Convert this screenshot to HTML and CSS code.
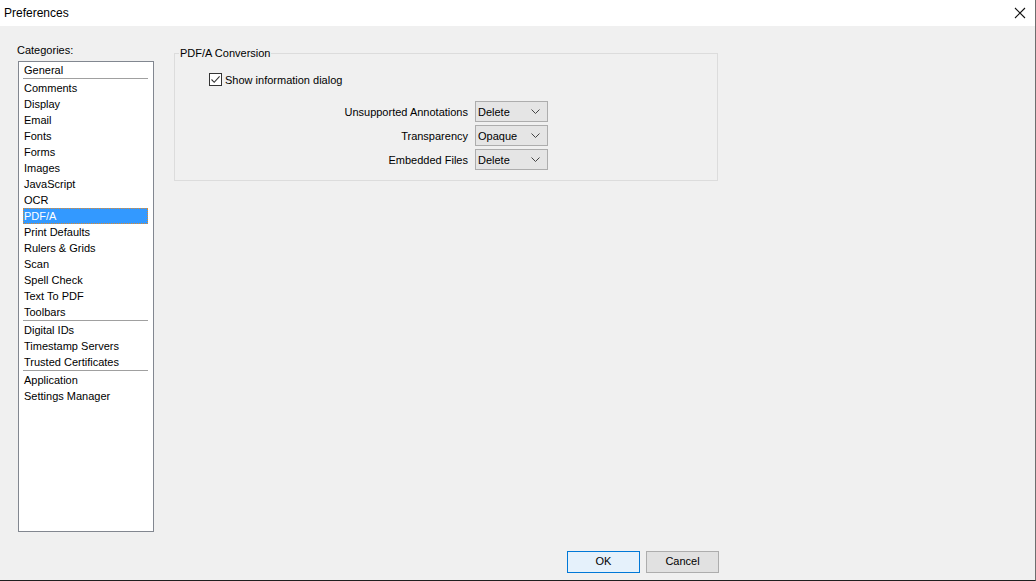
FILE: index.html
```html
<!DOCTYPE html>
<html lang="en">

<head>
    <meta charset="UTF-8">
    <title>Preferences</title>
    <link rel="stylesheet" href="styles.css">
</head>

<body>
    <div class="window">
        <div class="titlebar">
            <span class="title">Preferences</span>
            <span class="close-btn">
                <svg width="12" height="12" viewBox="0 0 12 12"><path d="M1 1 L11 11 M11 1 L1 11" stroke="#111" stroke-width="1.1" fill="none"/></svg>
            </span>
        </div>
        <div class="main">
            <div class="sidebar">
                <div class="cat-label">Categories:</div>
                <div class="cat-list">
                    <div class="cat-item">General</div>
                    <div class="cat-sep"></div>
                    <div class="cat-item">Comments</div>
                    <div class="cat-item">Display</div>
                    <div class="cat-item">Email</div>
                    <div class="cat-item">Fonts</div>
                    <div class="cat-item">Forms</div>
                    <div class="cat-item">Images</div>
                    <div class="cat-item">JavaScript</div>
                    <div class="cat-item">OCR</div>
                    <div class="cat-item selected">PDF/A</div>
                    <div class="cat-item">Print Defaults</div>
                    <div class="cat-item">Rulers &amp; Grids</div>
                    <div class="cat-item">Scan</div>
                    <div class="cat-item">Spell Check</div>
                    <div class="cat-item">Text To PDF</div>
                    <div class="cat-item">Toolbars</div>
                    <div class="cat-sep"></div>
                    <div class="cat-item">Digital IDs</div>
                    <div class="cat-item">Timestamp Servers</div>
                    <div class="cat-item">Trusted Certificates</div>
                    <div class="cat-sep"></div>
                    <div class="cat-item">Application</div>
                    <div class="cat-item">Settings Manager</div>
                </div>
            </div>
            <div class="panel">
                <fieldset class="group">
                    <legend>PDF/A Conversion</legend>
                    <div class="check-row">
                        <span class="checkbox">
                            <svg width="11" height="11" viewBox="0 0 11 11"><path d="M1.5 5.5 L4.2 8.3 L9.6 2.3" stroke="#333" stroke-width="1.1" fill="none"/></svg>
                        </span>
                        <span>Show information dialog</span>
                    </div>
                    <div class="form-rows">
                        <div class="form-row">
                            <label>Unsupported Annotations</label>
                            <div class="combo"><span>Delete</span><svg width="9" height="5" viewBox="0 0 9 5"><path d="M0.5 0.5 L4.5 4.5 L8.5 0.5" stroke="#444" fill="none"/></svg></div>
                        </div>
                        <div class="form-row">
                            <label>Transparency</label>
                            <div class="combo"><span>Opaque</span><svg width="9" height="5" viewBox="0 0 9 5"><path d="M0.5 0.5 L4.5 4.5 L8.5 0.5" stroke="#444" fill="none"/></svg></div>
                        </div>
                        <div class="form-row">
                            <label>Embedded Files</label>
                            <div class="combo"><span>Delete</span><svg width="9" height="5" viewBox="0 0 9 5"><path d="M0.5 0.5 L4.5 4.5 L8.5 0.5" stroke="#444" fill="none"/></svg></div>
                        </div>
                    </div>
                </fieldset>
            </div>
        </div>
        <div class="footer">
            <div class="btn btn-default">OK</div>
            <div class="btn">Cancel</div>
        </div>
    </div>
</body>

</html>
```

FILE: styles.css
```css
* {
    box-sizing: border-box;
}

body {
    margin: 0;
    font-family: "Liberation Sans", Arial, sans-serif;
    font-size: 11px;
    color: #000;
    background: #f0f0f0;
}

.window {
    width: 1036px;
    height: 581px;
    display: flex;
    flex-direction: column;
    background: #f0f0f0;
    border-right: 1px solid #6e6e6e;
    border-bottom: 1px solid #1f1f1f;
}

.titlebar {
    height: 26px;
    flex: none;
    background: #ffffff;
    display: flex;
    align-items: center;
    justify-content: space-between;
    padding-left: 4px;
}

.title {
    font-size: 12px;
}

.close-btn {
    width: 46px;
    height: 26px;
    display: flex;
    align-items: center;
    justify-content: center;
    padding-left: 16px;
}

.main {
    flex: 1;
    display: flex;
    padding: 18px 0 0 17px;
    min-height: 0;
}

.sidebar {
    width: 137px;
    display: flex;
    flex-direction: column;
}

.cat-label {
    line-height: 13px;
    height: 13px;
    margin-bottom: 4px;
}

.cat-list {
    flex: 1;
    margin-left: 1px;
    background: #ffffff;
    border: 1px solid #828790;
}

.cat-item {
    height: 16px;
    line-height: 16px;
    margin: 0 5px 0 4px;
    padding-left: 1px;
    white-space: nowrap;
}

.cat-item.selected {
    background: #3399ff;
    color: #ffffff;
    outline: 1px dotted #e08a2c;
    outline-offset: -1px;
}

.cat-sep {
    height: 2px;
    margin: 0 5px 0 4px;
    border-top: 1px solid #a0a0a0;
}

.panel {
    margin-left: 20px;
    width: 544px;
}

.group {
    margin: 3px 0 0 0;
    padding: 0 0 10px 34px;
    border: 1px solid #dcdcdc;
    min-width: 0;
}

.group legend {
    padding: 0 1px;
    margin-left: -30px;
    line-height: 13px;
}

.check-row {
    display: flex;
    align-items: center;
    height: 13px;
    margin-top: 13px;
}

.checkbox {
    width: 13px;
    height: 13px;
    border: 1px solid #333;
    background: #ffffff;
    display: flex;
    align-items: center;
    justify-content: center;
    margin-right: 3px;
}

.form-rows {
    display: flex;
    flex-direction: column;
    gap: 3px;
    margin-top: 15px;
}

.form-row {
    display: flex;
    align-items: center;
    height: 21px;
}

.form-row label {
    width: 259px;
    text-align: right;
    margin-right: 7px;
}

.combo {
    width: 73px;
    height: 21px;
    border: 1px solid #adadad;
    background: #e5e5e5;
    display: flex;
    align-items: center;
    justify-content: space-between;
    padding: 0 7px 0 2px;
}

.footer {
    flex: none;
    display: flex;
    justify-content: flex-end;
    gap: 6px;
    padding: 19px 316px 7px 0;
}

.btn {
    width: 73px;
    height: 22px;
    line-height: 19px;
    text-align: center;
    border: 1px solid #adadad;
    background: #e1e1e1;
}

.btn-default {
    border-color: #0078d7;
    background: #e5f1fb;
}
```
